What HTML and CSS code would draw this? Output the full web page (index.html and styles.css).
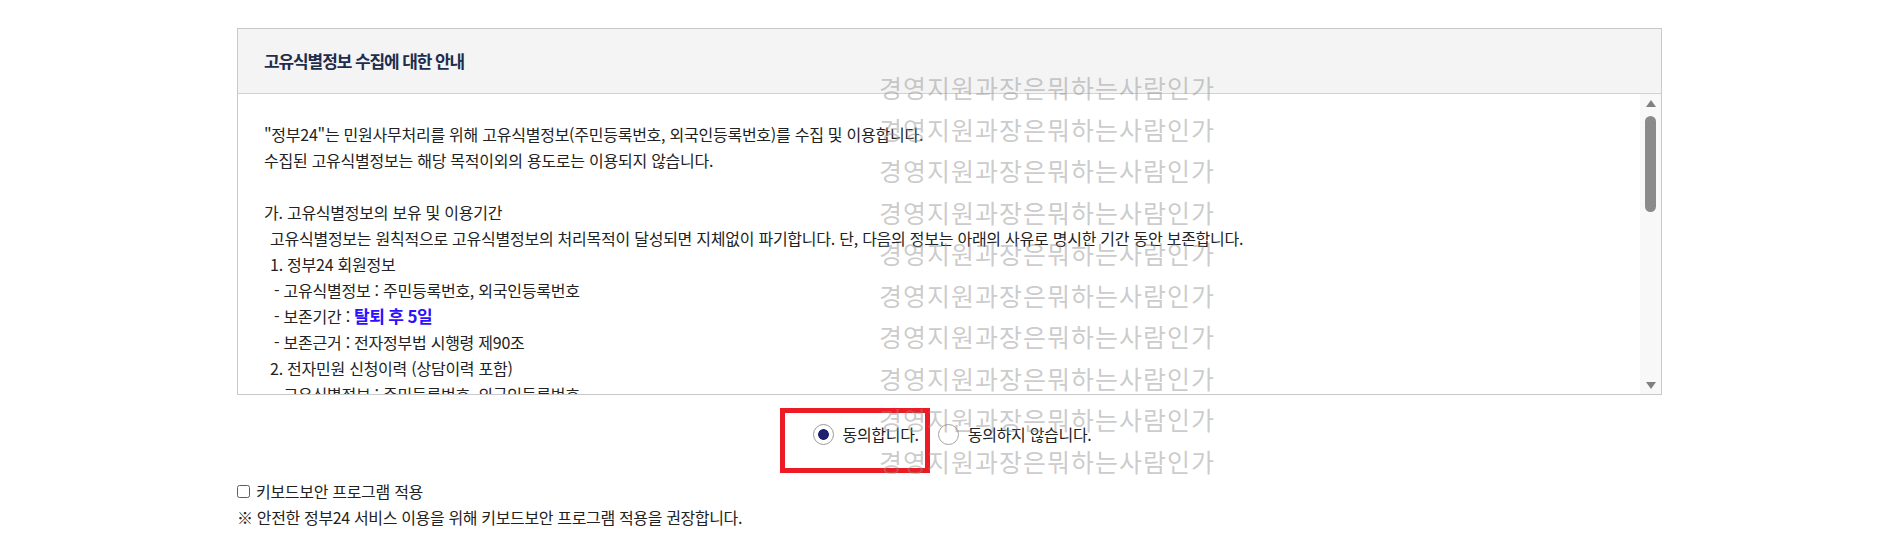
FILE: index.html
```html
<!DOCTYPE html>
<html lang="ko">
<head>
<meta charset="utf-8">
<title>고유식별정보 수집에 대한 안내</title>
<link rel="stylesheet" href="styles.css">
</head>
<body>
<div class="page">
  <section class="terms">
    <header class="terms-head"><h2 class="terms-title">고유식별정보 수집에 대한 안내</h2></header>
    <div class="terms-body">
      <div class="terms-text">
        <p class="ln">"정부24"는 민원사무처리를 위해 고유식별정보(주민등록번호, 외국인등록번호)를 수집 및 이용합니다.</p>
        <p class="ln">수집된 고유식별정보는 해당 목적이외의 용도로는 이용되지 않습니다.</p>
        <p class="ln"></p>
        <p class="ln">가. 고유식별정보의 보유 및 이용기간</p>
        <p class="ln i1">고유식별정보는 원칙적으로 고유식별정보의 처리목적이 달성되면 지체없이 파기합니다. 단, 다음의 정보는 아래의 사유로 명시한 기간 동안 보존합니다.</p>
        <p class="ln i1">1. 정부24 회원정보</p>
        <p class="ln i2">- 고유식별정보 : 주민등록번호, 외국인등록번호</p>
        <p class="ln i2">- 보존기간 : <strong class="em">탈퇴 후 5일</strong></p>
        <p class="ln i2">- 보존근거 : 전자정부법 시행령 제90조</p>
        <p class="ln i1">2. 전자민원 신청이력 (상담이력 포함)</p>
        <p class="ln i2">- 고유식별정보 : 주민등록번호, 외국인등록번호</p>
      </div>
      <div class="scrollbar"><span class="sb-up"></span><span class="sb-thumb"></span><span class="sb-down"></span></div>
    </div>
  </section>
  <div class="agree">
    <label class="opt"><input type="radio" name="agree" checked><span>동의합니다.</span></label>
    <label class="opt"><input type="radio" name="agree"><span>동의하지 않습니다.</span></label>
  </div>
  <label class="kb"><input type="checkbox"><span>키보드보안 프로그램 적용</span></label>
  <p class="notice">※ 안전한 정부24 서비스 이용을 위해 키보드보안 프로그램 적용을 권장합니다.</p>
  <div class="highlight"></div>
  <div class="watermark">
    <div>경영지원과장은뭐하는사람인가</div>
    <div>경영지원과장은뭐하는사람인가</div>
    <div>경영지원과장은뭐하는사람인가</div>
    <div>경영지원과장은뭐하는사람인가</div>
    <div>경영지원과장은뭐하는사람인가</div>
    <div>경영지원과장은뭐하는사람인가</div>
    <div>경영지원과장은뭐하는사람인가</div>
    <div>경영지원과장은뭐하는사람인가</div>
    <div>경영지원과장은뭐하는사람인가</div>
    <div>경영지원과장은뭐하는사람인가</div>
  </div>
</div>
</body>
</html>
```
FILE: styles.css
```css
* { box-sizing: border-box; }
html, body { margin: 0; padding: 0; background: #fff; }
body {
  font-family: "Noto Sans CJK KR", "Noto Sans", sans-serif;
  color: #222;
  width: 1896px;
  height: 556px;
  overflow: hidden;
}
.page { position: relative; padding: 28px 0 0 237px; height: 556px; }

.terms { width: 1425px; border: 1px solid #c9c9c9; background: #fff; }
.terms-head {
  height: 65px;
  background: #f4f4f4;
  border-bottom: 1px solid #d2d2d2;
  display: flex;
  align-items: center;
  padding-left: 26px;
}
.terms-title {
  margin: 0;
  font-size: 17px;
  font-weight: 700;
  letter-spacing: -1.1px;
  line-height: 20px;
  color: #1f2d4d;
}
.terms-body { display: flex; height: 300px; }
.terms-text {
  flex: 1;
  overflow: hidden;
  padding: 27px 0 0 26px;
  font-size: 16px;
  line-height: 26px;
  letter-spacing: -0.25px;
}
.ln { margin: 0; height: 26px; white-space: nowrap; }
.i1 { padding-left: 6px; }
.i2 { padding-left: 10px; }
.em { font-size: 17px; font-weight: 700; color: #2d10ff; letter-spacing: -0.6px; }

.scrollbar {
  width: 21px;
  background: #f8f8f8;
  display: flex;
  flex-direction: column;
  align-items: center;
  padding: 6px 0 5px;
}
.sb-up {
  width: 0; height: 0;
  border-left: 5.5px solid transparent;
  border-right: 5.5px solid transparent;
  border-bottom: 7px solid #808080;
}
.sb-thumb { width: 11px; height: 96px; margin-top: 9px; border-radius: 6px; background: #8b8b8b; }
.sb-down {
  margin-top: auto;
  width: 0; height: 0;
  border-left: 5.5px solid transparent;
  border-right: 5.5px solid transparent;
  border-top: 7px solid #808080;
}

.agree {
  width: 1425px;
  height: 21px;
  margin-top: 29px;
  padding-left: 5px;
  display: flex;
  justify-content: center;
  align-items: center;
  gap: 19px;
}
.opt {
  display: flex;
  align-items: center;
  gap: 9px;
  font-size: 16px;
  line-height: 21px;
  letter-spacing: -0.3px;
}
.opt input {
  -webkit-appearance: none;
  appearance: none;
  margin: 0;
  width: 21px;
  height: 21px;
  border: 1.5px solid #a3a3a3;
  border-radius: 50%;
  background: #fff;
}
.opt input:checked {
  background: radial-gradient(circle, #1f216f 0 5px, #fff 5.7px);
  border-color: #9a9a9a;
}

.kb {
  display: flex;
  align-items: center;
  gap: 6px;
  height: 22px;
  margin-top: 35px;
  font-size: 16px;
  letter-spacing: -0.3px;
}
.kb input {
  -webkit-appearance: none;
  appearance: none;
  margin: 0;
  width: 13px;
  height: 13px;
  border: 1px solid #5c5c5c;
  border-radius: 2.5px;
  background: #fff;
}
.notice {
  margin: 4px 0 0;
  font-size: 16px;
  line-height: 22px;
  letter-spacing: -0.35px;
}

.highlight {
  position: absolute;
  left: 780px;
  top: 408px;
  width: 150px;
  height: 65px;
  border: 5px solid #ed1c24;
}
.watermark {
  position: absolute;
  left: 879px;
  top: 67px;
  font-size: 25px;
  line-height: 41.5px;
  letter-spacing: 1px;
  color: rgba(140, 140, 140, 0.45);
  white-space: nowrap;
  pointer-events: none;
}
```
